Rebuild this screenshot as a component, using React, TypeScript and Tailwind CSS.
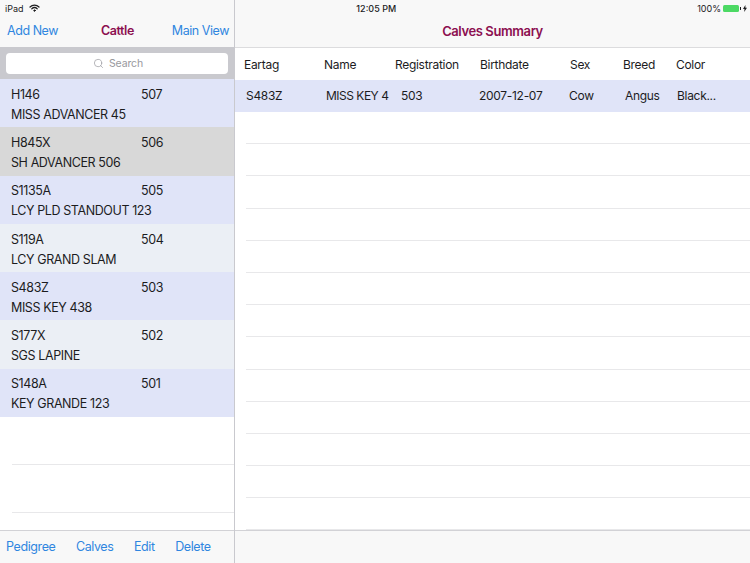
import React from 'react';
import { Search } from 'lucide-react';

const cattle = [
  { tag: 'H146', reg: '507', name: 'MISS ADVANCER 45', bg: 'bg-[#e0e4f8]' },
  { tag: 'H845X', reg: '506', name: 'SH ADVANCER 506', bg: 'bg-[#d8d8d8]' },
  { tag: 'S1135A', reg: '505', name: 'LCY PLD STANDOUT 123', bg: 'bg-[#e0e4f8]' },
  { tag: 'S119A', reg: '504', name: 'LCY GRAND SLAM', bg: 'bg-[#ebeff5]' },
  { tag: 'S483Z', reg: '503', name: 'MISS KEY 438', bg: 'bg-[#e0e4f8]' },
  { tag: 'S177X', reg: '502', name: 'SGS LAPINE', bg: 'bg-[#ebeff5]' },
  { tag: 'S148A', reg: '501', name: 'KEY GRANDE 123', bg: 'bg-[#e0e4f8]' },
];

const emptyRows = Array.from({ length: 13 }, (_, i) => i);

const App: React.FC = () => {
  return (
    <div className="flex h-[563px] w-[750px] overflow-hidden bg-white font-['Inter','Liberation_Sans',sans-serif] text-[#1c1c1e]">
      {/* Cattle list */}
      <div className="flex w-[235px] shrink-0 flex-col border-r border-[#c9c9ce]">
        <div className="h-[47px] shrink-0 bg-[#f8f8f8]">
          <div className="flex h-[16px] items-center gap-[5px] pl-[5px] text-[9px] leading-none">
            <span>iPad</span>
            <svg width="11" height="8" viewBox="0 0 11 8" fill="none" stroke="#1c1c1e" strokeLinecap="round">
              <path d="M1 3a6.4 6.4 0 0 1 9 0" strokeWidth="1.2" />
              <path d="M2.8 4.8a3.9 3.9 0 0 1 5.4 0" strokeWidth="1.2" />
              <circle cx="5.5" cy="6.6" r="0.7" fill="#1c1c1e" />
            </svg>
          </div>
          <div className="flex h-[31px] items-center justify-between pl-[7px] pr-[5px] text-[12.5px] tracking-[-0.45px] text-[#2f86e0]">
            <span>Add New</span>
            <span className="ml-[5px] font-semibold text-[#8c0f50]">Cattle</span>
            <span>Main View</span>
          </div>
        </div>
        <div className="flex h-[32px] shrink-0 items-center bg-[#c9c9ce] px-[6px]">
          <div className="flex h-[21px] w-full items-center justify-center gap-[5px] rounded-[4px] bg-white pl-[2px] pt-[1px] text-[10.5px] tracking-[-0.1px] text-[#98989d]">
            <Search size={11} strokeWidth={1.5} />
            <span>Search</span>
          </div>
        </div>
        <div className="flex-1 overflow-hidden">
          {cattle.map((c) => (
            <div key={c.tag} className={`h-[48.3px] pl-[11px] pt-[5px] text-[12.5px] tracking-[-0.4px] ${c.bg}`}>
              <div className="flex h-[20px] translate-y-[1px] items-center">
                <span className="w-[130px]">{c.tag}</span>
                <span>{c.reg}</span>
              </div>
              <div className="flex h-[20px] translate-y-[1px] items-center">{c.name}</div>
            </div>
          ))}
          <div className="ml-[12px] h-[48px] border-b border-[#e8e8ea]" />
          <div className="ml-[12px] h-[48px] border-b border-[#e8e8ea]" />
        </div>
        <div className="flex h-[33px] shrink-0 items-center gap-[20.5px] border-t border-[#d2d2d6] bg-[#f8f8f8] pl-[6px] text-[12.5px] tracking-[-0.4px] text-[#2f86e0]">
          <span>Pedigree</span>
          <span>Calves</span>
          <span>Edit</span>
          <span>Delete</span>
        </div>
      </div>

      {/* Calves summary */}
      <div className="flex flex-1 flex-col">
        <div className="h-[48px] shrink-0 border-b border-[#dcdcde] bg-[#f8f8f8]">
          <div className="flex h-[16px] items-center justify-end pr-[3px] text-[9px] leading-none">
            <span className="mr-[301px] font-medium">12:05 PM</span>
            <span>100%</span>
            <span className="ml-[2px] flex items-center">
              <span className="h-[7px] w-[16px] rounded-[1.5px] bg-[#4cd964]" />
              <span className="ml-[1px] h-[3px] w-[1px] bg-[#1c1c1e]" />
            </span>
            <svg className="ml-[2px]" width="4" height="7" viewBox="0 0 4 7" fill="#1c1c1e">
              <path d="M2.4 0 0 4h1.5L1.2 7 4 2.8H2.4z" />
            </svg>
          </div>
          <div className="flex h-[31px] items-center justify-center text-[13px] font-semibold tracking-[-0.4px] text-[#8c0f50]">
            Calves Summary
          </div>
        </div>
        <div className="flex h-[32px] shrink-0 translate-y-[1px] items-center text-[12px] tracking-[-0.3px]">
          <span className="w-[80px] pl-[9px]">Eartag</span>
          <span className="w-[80px] pl-[9px]">Name</span>
          <span className="w-[85px]">Registration</span>
          <span className="w-[90px]">Birthdate</span>
          <span className="w-[53px]">Sex</span>
          <span className="w-[53px]">Breed</span>
          <span>Color</span>
        </div>
        <div className="flex h-[32px] shrink-0 items-center bg-[#e0e4f8] text-[12px] tracking-[-0.3px]">
          <span className="w-[81px] pl-[11px]">S483Z</span>
          <span className="w-[85px] whitespace-nowrap pl-[10px] tracking-[-0.5px]">MISS KEY 4</span>
          <span className="w-[78px]">503</span>
          <span className="w-[90px]">2007-12-07</span>
          <span className="w-[56px]">Cow</span>
          <span className="w-[52px]">Angus</span>
          <span>Black...</span>
        </div>
        <div className="flex-1 overflow-hidden">
          {emptyRows.map((i) => (
            <div key={i} className="ml-[11px] h-[32.2px] border-b border-[#e8e8ea]" />
          ))}
        </div>
        <div className="h-[33px] shrink-0 border-t border-[#d2d2d6] bg-[#f8f8f8]" />
      </div>
    </div>
  );
};

export default App;
